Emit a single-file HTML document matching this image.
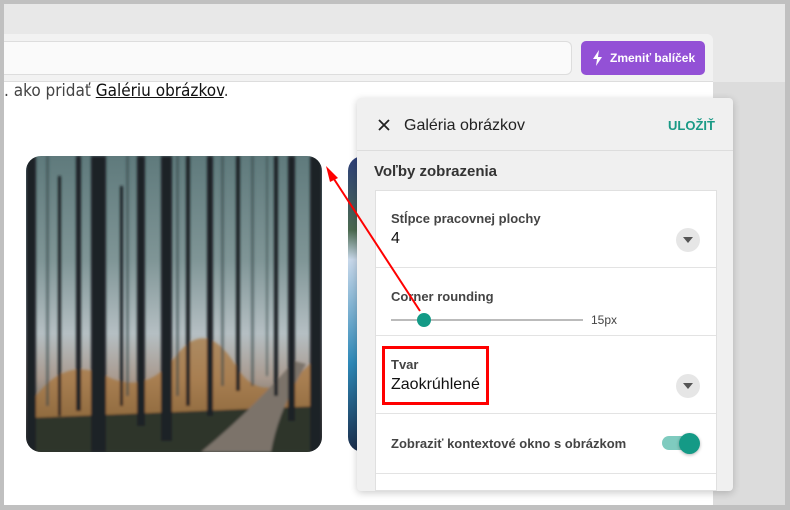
<!DOCTYPE html>
<html><head><meta charset="utf-8"><style>
*{margin:0;padding:0;box-sizing:border-box}
body{width:790px;height:510px;overflow:hidden;background:#c0c0c0;font-family:"Liberation Sans",sans-serif;position:relative}
.abs{position:absolute}
</style></head><body>
<div class="abs" style="left:4px;top:4px;width:781px;height:501px;background:#e8e8e8"></div>
<div class="abs" style="left:713px;top:82px;width:72px;height:423px;background:#dcdcdc"></div>
<div class="abs" style="left:4px;top:34px;width:709px;height:48px;background:#f2f2f2;border-radius:0 6px 0 0;border-bottom:1px solid #ddd"></div>
<div class="abs" style="left:4px;top:41px;width:568px;height:34px;background:#fafafa;border:1px solid #ddd;border-left:none;border-radius:0 6px 6px 0"></div>
<div class="abs" style="left:581px;top:41px;width:124px;height:34px;background:#9351d6;border-radius:5px;color:#fff;font-weight:bold;font-size:12px;line-height:34px;padding-left:29px">Zmeniť balíček
<svg class="abs" style="left:11px;top:9px" width="12" height="16" viewBox="0 0 12 16"><path d="M7 0L1 9h4l-1 7 6-9H6z" fill="#fff"/></svg></div>
<div class="abs" style="left:4px;top:82px;width:709px;height:423px;background:#fff"></div>
<div class="abs" style="left:4px;top:81px;font-size:17px;color:#444;font-family:'DejaVu Sans Condensed','Liberation Sans Narrow',sans-serif">. ako pridať <span style="color:#111;text-decoration:underline">Galériu obrázkov</span>.</div>
<svg class="abs" style="left:26px;top:156px" width="296" height="296">
<defs><clipPath id="c"><rect width="296" height="296" rx="15"/></clipPath>
<linearGradient id="g" x1="0" y1="0" x2="0" y2="1"><stop offset="0" stop-color="#5f7a7c"/><stop offset=".35" stop-color="#7f9596"/><stop offset=".6" stop-color="#b5bfc3"/><stop offset=".75" stop-color="#a99a8f"/><stop offset="1" stop-color="#2c3430"/></linearGradient>
<filter id="b"><feGaussianBlur stdDeviation="1.2"/></filter></defs>
<g clip-path="url(#c)">
<rect width="296" height="296" fill="url(#g)"/>
<g filter="url(#b)">
<path d="M10 240 Q40 200 80 220 T150 200 T210 210 T296 195 L296 296 L0 296 Z" fill="#a8702e" opacity=".65"/>
<path d="M0 262 L296 250 L296 296 L0 296Z" fill="#2f3529"/>
<path d="M175 296 Q225 255 268 205 L280 208 Q252 255 245 296Z" fill="#7c736a"/>
<g fill="#3a4a4d" opacity=".6"><rect x="20" y="0" width="3" height="250"/><rect x="150" y="0" width="3" height="240"/><rect x="195" y="0" width="3" height="230"/><rect x="225" y="0" width="3" height="230"/><rect x="240" y="0" width="2" height="220"/><rect x="100" y="0" width="3" height="240"/></g>
<g fill="#1a2226">
<rect x="0" y="0" width="10" height="296"/><rect x="65" y="0" width="15" height="296"/><rect x="135" y="0" width="11" height="285"/><rect x="111" y="0" width="8" height="270"/><rect x="50" y="0" width="5" height="255"/><rect x="181" y="0" width="6" height="260"/><rect x="210" y="0" width="4" height="235"/><rect x="262" y="0" width="7" height="265"/><rect x="284" y="0" width="12" height="296"/><rect x="248" y="0" width="4" height="240"/><rect x="160" y="0" width="4" height="250"/><rect x="32" y="20" width="3" height="240"/><rect x="94" y="30" width="3" height="220"/>
</g></g></g></svg>
<svg class="abs" style="left:348px;top:156px" width="20" height="296"><defs><linearGradient id="w" x1="0" y1="0" x2="0" y2="1"><stop offset="0" stop-color="#2d3f7a"/><stop offset=".25" stop-color="#4b6a50"/><stop offset=".35" stop-color="#c8d8ea"/><stop offset=".7" stop-color="#2e89b8"/><stop offset="1" stop-color="#1b2d4a"/></linearGradient></defs><rect width="40" height="296" rx="15" fill="url(#w)"/></svg>
<div class="abs" style="left:357px;top:98px;width:376px;height:393px;background:#f0f0f0;border-radius:4px;box-shadow:0 2px 8px rgba(0,0,0,.2)"></div>
<div class="abs" style="left:357px;top:150px;width:376px;height:1px;background:#ddd"></div>
<svg class="abs" style="left:377px;top:118px" width="14" height="14"><path d="M2 2L12 12M12 2L2 12" stroke="#222" stroke-width="1.8"/></svg>
<div class="abs" style="left:404px;top:117px;font-size:16px;color:#222">Galéria obrázkov</div>
<div class="abs" style="left:668px;top:118px;font-size:13px;color:#1a9a86;font-weight:bold">ULOŽIŤ</div>
<div class="abs" style="left:374px;top:163px;font-size:15px;color:#333;font-weight:bold">Voľby zobrazenia</div>
<div class="abs" style="left:375px;top:190px;width:342px;height:301px;background:#fff;border:1px solid #e0e0e0"></div>
<div class="abs" style="left:376px;top:267px;width:340px;height:1px;background:#e3e3e3"></div>
<div class="abs" style="left:376px;top:335px;width:340px;height:1px;background:#e3e3e3"></div>
<div class="abs" style="left:376px;top:413px;width:340px;height:1px;background:#e3e3e3"></div>
<div class="abs" style="left:376px;top:473px;width:340px;height:1px;background:#e3e3e3"></div>
<div class="abs" style="left:391px;top:211px;font-size:13px;color:#444;font-weight:bold">Stĺpce pracovnej plochy</div>
<div class="abs" style="left:391px;top:230px;font-size:16px;color:#111">4</div>
<div class="abs" style="left:676px;top:228px;width:24px;height:24px;border-radius:50%;background:#e6e6e6"></div>
<svg class="abs" style="left:683px;top:237px" width="10" height="6"><path d="M0 0h10L5 6z" fill="#555"/></svg>
<div class="abs" style="left:391px;top:289px;font-size:13px;color:#444;font-weight:bold">Corner rounding</div>
<div class="abs" style="left:391px;top:319px;width:192px;height:2px;background:#bbb"></div>
<div class="abs" style="left:417px;top:313px;width:14px;height:14px;border-radius:50%;background:#149a86"></div>
<div class="abs" style="left:591px;top:313px;font-size:12px;color:#444">15px</div>
<div class="abs" style="left:391px;top:357px;font-size:13px;color:#444;font-weight:bold">Tvar</div>
<div class="abs" style="left:391px;top:376px;font-size:16px;color:#111">Zaokrúhlené</div>
<div class="abs" style="left:676px;top:374px;width:24px;height:24px;border-radius:50%;background:#e6e6e6"></div>
<svg class="abs" style="left:683px;top:383px" width="10" height="6"><path d="M0 0h10L5 6z" fill="#555"/></svg>
<div class="abs" style="left:391px;top:436px;font-size:13px;color:#444;font-weight:bold">Zobraziť kontextové okno s obrázkom</div>
<div class="abs" style="left:662px;top:436px;width:34px;height:14px;border-radius:7px;background:#7fcbbf"></div>
<div class="abs" style="left:679px;top:433px;width:21px;height:21px;border-radius:50%;background:#149a86;box-shadow:0 1px 3px rgba(0,0,0,.3)"></div>
<div class="abs" style="left:382px;top:346px;width:107px;height:59px;border:3px solid #f00"></div>
<svg class="abs" style="left:0;top:0" width="790" height="510"><line x1="420" y1="311" x2="332" y2="176" stroke="#f00" stroke-width="2"/><path d="M326 166L338 178L330 182Z" fill="#f00"/></svg>
</body></html>
